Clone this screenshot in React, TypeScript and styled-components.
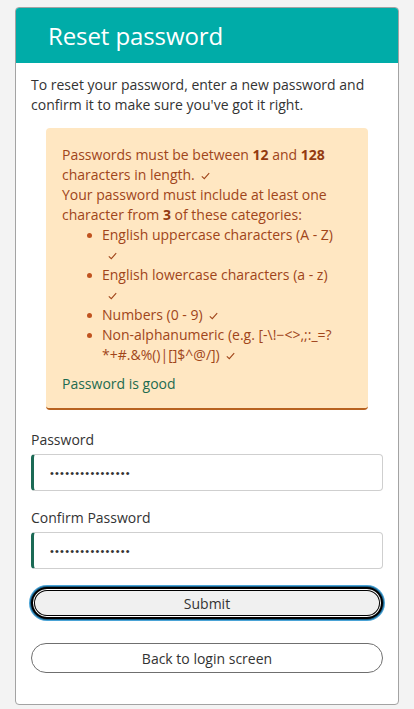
import React from "react";
import styled, { createGlobalStyle } from "styled-components";

const Global = createGlobalStyle`
  html, body { margin: 0; padding: 0; background: #f3f3f3; }
  body { font-family: "Open Sans", "Noto Sans", Arial, sans-serif; color: #333; }
  * { box-sizing: border-box; }
`;

const Page = styled.div`
  padding: 7px 15px 7px 15px;
`;

const Card = styled.section`
  background: #fff;
  border: 1px solid #a3a3a3;
  border-radius: 4px;
  overflow: hidden;
`;

const Header = styled.header`
  background: #00aca8;
  height: 55px;
  display: flex;
  align-items: center;
  padding-left: 32px;
`;

const Title = styled.h1`
  margin: 0;
  font-weight: 400;
  font-size: 24px;
  color: #fff;
  letter-spacing: -0.1px;
`;

const Body = styled.div`
  padding: 12px 15px 31px 15px;
  display: flex;
  flex-direction: column;
`;

const Intro = styled.p`
  margin: 0;
  font-size: 14px;
  line-height: 20px;
  color: #333;
`;

const Notice = styled.div`
  margin: 13px 15px 0 15px;
  background: #ffe7c2;
  border-radius: 4px;
  border-bottom: 2px solid #b8621f;
  padding: 17px 16px 14px 16px;
  color: #a0451a;
  font-size: 14px;
  line-height: 20px;
`;

const Strong = styled.b`
  font-weight: 700;
  color: #933a10;
`;

const List = styled.ul`
  margin: 0;
  padding-left: 40px;
  list-style: none;
`;

const Item = styled.li`
  position: relative;
  &::before {
    content: "";
    position: absolute;
    left: -15px;
    top: 8px;
    width: 5px;
    height: 5px;
    border-radius: 50%;
    background: #c0531f;
  }
`;

const Good = styled.div`
  margin-top: 9px;
  color: #1d6b50;
`;

const CheckSvg = styled.svg`
  display: inline-block;
  width: 9px;
  height: 8px;
  margin-left: 6px;
  vertical-align: 0px;
`;

const Check = () => (
  <CheckSvg viewBox="0 0 9 8">
    <path d="M0.8 4.3 L3.3 6.6 L8.2 1.2" fill="none" stroke="#a0451a" strokeWidth="1.1" />
  </CheckSvg>
);

const Label = styled.label<{ $top: number }>`
  display: block;
  font-size: 14px;
  line-height: 20px;
  color: #333;
  margin-top: ${(p) => p.$top}px;
  margin-bottom: 4px;
`;

const Input = styled.input`
  width: 100%;
  height: 37px;
  border: 1px solid #cfcfcf;
  border-left: 3px solid #1b6a55;
  border-radius: 4px;
  padding: 0 16px;
  font-size: 11px;
  letter-spacing: 1.2px;
  color: #333;
  background: #fff;
  font-family: "Liberation Sans", Arial, sans-serif;
  outline: none;
`;

const Button = styled.button<{ $focus?: boolean; $top: number }>`
  width: 100%;
  height: ${(p) => (p.$focus ? 32 : 30)}px;
  margin-top: ${(p) => p.$top}px;
  border-radius: 16px;
  font-family: "Open Sans", "Noto Sans", Arial, sans-serif;
  font-size: 14px;
  color: #333;
  cursor: pointer;
  background: ${(p) => (p.$focus ? "#f0f0f0" : "#fff")};
  border: ${(p) => (p.$focus ? "2px solid #000" : "1px solid #6f6f6f")};
  box-shadow: ${(p) =>
    p.$focus ? "inset 0 0 0 1px #fff, inset 0 0 0 2px #000, 0 0 0 1px #1a5f86, 0 0 0 2px #4aa3d6" : "none"};
`;

export default function App() {
  return (
    <>
      <Global />
      <Page>
        <Card>
          <Header>
            <Title>Reset password</Title>
          </Header>
          <Body>
            <Intro>
              To reset your password, enter a new password and confirm it to make sure you've got it right.
            </Intro>
            <Notice>
              Passwords must be between <Strong>12</Strong> and <Strong>128</Strong> characters in length.
              <Check />
              <br />
              Your password must include at least one character from <Strong>3</Strong> of these categories:
              <List>
                <Item>
                  English uppercase characters (A - Z)
                  <br />
                  <Check />
                </Item>
                <Item>
                  English lowercase characters (a - z)
                  <br />
                  <Check />
                </Item>
                <Item>
                  Numbers (0 - 9)
                  <Check />
                </Item>
                <Item>
                  Non-alphanumeric (e.g. [-\!−&lt;&gt;,;:_=?
                  <br />
                  *+#.&amp;%()|[]$^@/])
                  <Check />
                </Item>
              </List>
              <Good>Password is good</Good>
            </Notice>
            <Label $top={20}>Password</Label>
            <Input type="password" readOnly value="aaaaaaaaaaaaaaaa" />
            <Label $top={17}>Confirm Password</Label>
            <Input type="password" readOnly value="aaaaaaaaaaaaaaaa" />
            <Button $focus $top={18}>Submit</Button>
            <Button $top={24}>Back to login screen</Button>
          </Body>
        </Card>
      </Page>
    </>
  );
}
